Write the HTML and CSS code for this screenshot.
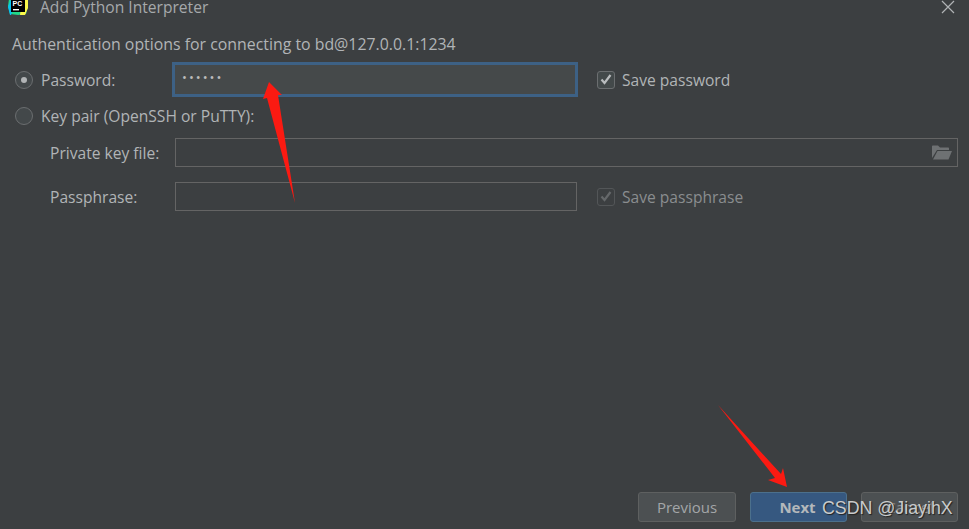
FILE: index.html
```html
<!DOCTYPE html>
<html lang="en">
<head>
    <meta charset="UTF-8">
    <meta name="viewport" content="width=device-width, initial-scale=1.0">
    <title>Add Python Interpreter</title>
    <link rel="stylesheet" href="styles.css">
</head>
<body>
    <div id="dialog">
        <div class="title-bar">
            <svg class="logo" width="20" height="16" viewBox="0 0 20 16">
                <path d="M1 0h18l1 6-2 9-8 1-8-1-2-8z" fill="#21d789"/>
                <path d="M0 8l3-8h6l-6 16H2z" fill="#07c3f2"/>
                <path d="M14 0h6v9l-3 7h-5z" fill="#fcf84a"/>
                <rect x="3" y="0" width="14" height="13" fill="#000"/>
                <text x="4.5" y="7" class="logo-text">PC</text>
                <rect x="5" y="10" width="6" height="1.4" fill="#fff"/>
            </svg>
            <span class="title">Add Python Interpreter</span>
            <svg class="close" width="14" height="14" viewBox="0 0 14 14">
                <path d="M1 1l12 12M13 1L1 13" stroke="#b0b3b5" stroke-width="1.2" fill="none"/>
            </svg>
        </div>

        <div class="intro">Authentication options for connecting to bd@127.0.0.1:1234</div>

        <div class="form-row row-password">
            <span class="radio radio-on"></span>
            <label class="radio-label label-password">Password:</label>
            <div class="field field-focus">••••••</div>
            <span class="check"><svg width="12" height="11" viewBox="0 0 12 11"><path d="M1.5 5.5l3 3.500 6-8" stroke="#b9bcbe" stroke-width="2.2" fill="none"/></svg></span>
            <span class="check-label">Save password</span>
        </div>

        <div class="form-row row-key">
            <span class="radio"></span>
            <label class="radio-label">Key pair (OpenSSH or PuTTY):</label>
        </div>

        <div class="form-row row-file">
            <label class="sub-label">Private key file:</label>
            <div class="field field-file">
                <svg width="20" height="15" viewBox="0 0 20 15">
                    <path d="M0 1.5C0 .8.5.5 1 .5h5l2 2h8c.6 0 1 .4 1 1V5H5L0 13z" fill="#6e7173"/>
                    <path d="M5.5 6H20l-3.5 8.500H1z" fill="#6e7173"/>
                </svg>
            </div>
        </div>

        <div class="form-row row-phrase">
            <label class="sub-label">Passphrase:</label>
            <div class="field field-phrase"></div>
            <span class="check check-off"><svg width="12" height="11" viewBox="0 0 12 11"><path d="M1.500 5.500l3 3.500 6-8" stroke="#65686a" stroke-width="2.2" fill="none"/></svg></span>
            <span class="check-label check-label-off">Save passphrase</span>
        </div>

        <div class="buttons">
            <button class="btn btn-prev">Previous</button>
            <button class="btn btn-next">Next</button>
            <button class="btn btn-cancel">Cancel</button>
        </div>
    </div>

    <svg class="arrows" width="969" height="529" viewBox="0 0 969 529">
        <path d="M269 82L282 95 278 95 295 203 267 98 263 99z" fill="#fb1a12"/>
        <path d="M718 405L781 474 783 468 787 487 768 480 775 478z" fill="#fb1a12"/>
    </svg>

    <div class="watermark">CSDN @JiayihX</div>
</body>
</html>
```

FILE: styles.css
```css
body {
    margin: 0;
    height: 529px;
    overflow: hidden;
    font-family: 'Open Sans', sans-serif;
    font-size: 15.6px;
    color: #b1b4b6;
    background-color: #3c3f41;
}

#dialog {
    height: 529px;
    display: flex;
    flex-direction: column;
    box-sizing: border-box;
    padding: 0 11px 7px 12px;
}

.title-bar {
    height: 15px;
    display: flex;
    align-items: center;
}

.logo {
    margin-left: -4px;
    margin-top: -1px;
}

.logo-text {
    font-family: 'Liberation Sans', sans-serif;
    font-size: 7px;
    font-weight: bold;
    fill: #fff;
}

.title {
    margin-left: 12px;
    line-height: 15px;
    color: #a6a9ab;
}

.close {
    margin-left: auto;
    margin-right: 3px;
    margin-top: -2px;
}

.intro {
    margin-top: 19px;
    height: 20px;
    line-height: 20px;
    font-size: 15.87px;
}

.form-row {
    display: flex;
    align-items: center;
}

.row-password {
    margin-top: 9px;
    height: 33px;
    padding-left: 3px;
}

.row-key {
    margin-top: 2px;
    height: 36px;
    padding-left: 3px;
}

.row-file {
    margin-top: 4px;
    height: 29px;
    padding-left: 38px;
}

.row-phrase {
    margin-top: 15px;
    height: 29px;
    padding-left: 38px;
}

.radio {
    width: 18px;
    height: 18px;
    border: 1px solid #6b6e70;
    border-radius: 50%;
    background-color: #43484a;
    box-sizing: border-box;
    display: flex;
    align-items: center;
    justify-content: center;
    flex: none;
}

.radio-on::after {
    content: "";
    width: 6px;
    height: 6px;
    border-radius: 50%;
    background-color: #b1b4b6;
}

.radio-label {
    margin-left: 8px;
}

.label-password {
    width: 131px;
}

.sub-label {
    width: 125px;
}

.field {
    box-sizing: border-box;
    height: 29px;
    border: 1px solid #646464;
    background-color: #3c3f41;
}

.field-focus {
    width: 406px;
    height: 35px;
    flex: none;
    border: 3px solid #3d6185;
    background-color: #45494a;
    padding-left: 7px;
    line-height: 24px;
    font-size: 13px;
    letter-spacing: 2px;
    color: #bbbbbb;
}

.field-file {
    flex: 1;
    display: flex;
    align-items: center;
    justify-content: flex-end;
    padding-right: 5px;
}

.field-phrase {
    width: 402px;
}

.check {
    width: 18px;
    height: 18px;
    box-sizing: border-box;
    border: 1px solid #6b6e70;
    border-radius: 3px;
    background-color: #43494a;
    display: flex;
    align-items: center;
    justify-content: center;
    flex: none;
}

.row-password .check {
    margin-left: 19px;
}

.check-off {
    margin-left: 20px;
    border-color: #535658;
    background-color: #3c3f41;
}

.check-label {
    margin-left: 7px;
}

.check-label-off {
    color: #8a8d8f;
}

.buttons {
    margin-top: auto;
    display: flex;
    justify-content: flex-end;
    gap: 14px;
}

.btn {
    width: 97px;
    height: 30px;
    box-sizing: border-box;
    border: 1px solid #5e6060;
    border-radius: 3px;
    background-color: #4c5052;
    color: #a3a6a8;
    font-family: 'Open Sans', sans-serif;
    font-size: 15px;
    padding: 0;
}

.btn-prev {
    width: 98px;
}

.btn-next {
    background-color: #365880;
    border-color: #4c708c;
    color: #b4b8bb;
    font-weight: bold;
    padding-right: 2px;
}

.btn-cancel {
    color: #8e9193;
}

.arrows {
    position: absolute;
    top: 0;
    left: 0;
    pointer-events: none;
}

.watermark {
    position: absolute;
    left: 822px;
    top: 496px;
    font-family: 'Liberation Sans', sans-serif;
    font-size: 17.8px;
    line-height: 24px;
    color: #c9cbcc;
    text-shadow: 1px 1px 1px #222;
    white-space: nowrap;
}
```
